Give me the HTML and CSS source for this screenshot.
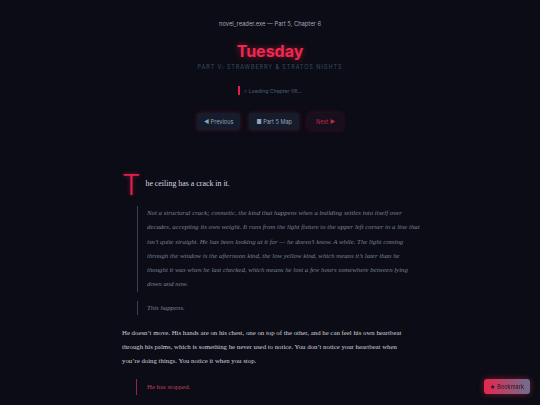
FILE: index.html
```html
<!DOCTYPE html>
<html>
<head>
<meta charset="utf-8">
<link rel="stylesheet" href="styles.css">
</head>
<body>
<div class="page">
  <header class="head">
    <div class="app">novel_reader.exe — Part 5, Chapter 6</div>
    <h1 class="title">Tuesday</h1>
    <div class="sub">PART V: STRAWBERRY &amp; STRATOS NIGHTS</div>
    <div class="loading"><span class="bar"></span><span>&gt; Loading Chapter 06...</span></div>
    <nav class="nav">
      <button class="btn">◀ Previous</button>
      <button class="btn">■ Part 5 Map</button>
      <button class="btn next">Next ▶</button>
    </nav>
  </header>
  <article class="story">
    <p class="lead"><span class="drop">T</span><span class="lead-text">he ceiling has a crack in it.</span></p>
    <blockquote class="thought">Not a structural crack; cosmetic, the kind that happens when a building settles into itself over<br>decades, accepting its own weight. It runs from the light fixture to the upper left corner in a line that<br>isn’t quite straight. He has been looking at it for — he doesn’t know. A while. The light coming<br>through the window is the afternoon kind, the low yellow kind, which means it’s later than he<br>thought it was when he last checked, which means he lost a few hours somewhere between lying<br>down and now.</blockquote>
    <blockquote class="thought short">This happens.</blockquote>
    <p class="para">He doesn’t move. His hands are on his chest, one on top of the other, and he can feel his own heartbeat<br>through his palms, which is something he never used to notice. You don’t notice your heartbeat when<br>you’re doing things. You notice it when you stop.</p>
    <blockquote class="stop">He has stopped.</blockquote>
  </article>
</div>
<button class="bookmark">★ Bookmark</button>
</body>
</html>
```
FILE: styles.css
```css
html, body {
  margin: 0;
  padding: 0;
  background: #0b0c15;
  height: 100%;
  overflow: hidden;
}
.page {
  width: 296px;
  margin: 0 auto;
  padding-top: 19px;
}
.head {
  display: flex;
  flex-direction: column;
  align-items: center;
  font-family: "Inter", "DejaVu Sans", sans-serif;
}
.app {
  font-size: 5.8px;
  color: #a4a8b4;
  line-height: 10px;
}
.title {
  margin: 12px 0 0;
  font-size: 16px;
  line-height: 20px;
  font-weight: 700;
  color: #f0284f;
  text-shadow: 0 0 6px rgba(240, 40, 80, 0.6);
}
.sub {
  margin-top: 2px;
  font-size: 5.5px;
  letter-spacing: 0.9px;
  color: #3a4c62;
  line-height: 8px;
}
.loading {
  margin-top: 15px;
  display: flex;
  align-items: center;
  gap: 4px;
  font-size: 5.2px;
  color: #4e5e76;
  line-height: 8px;
}
.bar {
  width: 1.5px;
  height: 9px;
  background: #e0204a;
}
.nav {
  margin-top: 18px;
  display: flex;
  gap: 9px;
}
.btn {
  font-family: "Inter", "DejaVu Sans", sans-serif;
  font-size: 5.6px;
  height: 17px;
  padding: 0 7px;
  border: none;
  border-radius: 2px;
  background: #151c2b;
  color: #98a2b8;
  box-shadow: 0 0 5px rgba(200, 30, 70, 0.3);
}
.btn.next {
  background: #170f1b;
  color: #c0284a;
  padding: 0 8px;
}
.story {
  margin-top: 44px;
  font-family: "Liberation Serif", serif;
}
.lead {
  margin: 0;
  display: flex;
  align-items: center;
  font-size: 7.9px;
  color: #d8d8e0;
  height: 22px;
}
.lead-text {
  padding-bottom: 3px;
}
.drop {
  font-family: "Inter", "DejaVu Sans", sans-serif;
  font-size: 29px;
  line-height: 22px;
  color: #e0204a;
  margin-right: 5px;
  text-shadow: 0 0 4px rgba(224, 32, 74, 0.5);
  font-weight: 300;
}
.thought {
  margin: 10px 0 0 15px;
  padding: 0 0 0 9px;
  border-left: 1px solid #3a4152;
  font-style: italic;
  font-size: 6.8px;
  line-height: 14.3px;
  color: #7a8194;
  white-space: nowrap;
}
.thought.short {
  margin-top: 9px;
}
.para {
  margin: 11px 0 0;
  font-size: 6.8px;
  line-height: 14px;
  color: #d0d1da;
  white-space: nowrap;
}
.stop {
  margin: 11px 0 0 14px;
  padding: 1px 0 1px 10px;
  border-left: 1.5px solid #a0203e;
  font-size: 6.8px;
  line-height: 14px;
  color: #c0405a;
}
.bookmark {
  position: fixed;
  right: 10px;
  bottom: 11px;
  height: 15px;
  padding: 0 6px;
  border: none;
  border-radius: 3px;
  font-family: "Inter", "DejaVu Sans", sans-serif;
  font-size: 5.6px;
  color: #2a1020;
  background: linear-gradient(90deg, #e8264e, #6c7090);
  box-shadow: 0 0 6px rgba(230, 38, 80, 0.5);
}
```
